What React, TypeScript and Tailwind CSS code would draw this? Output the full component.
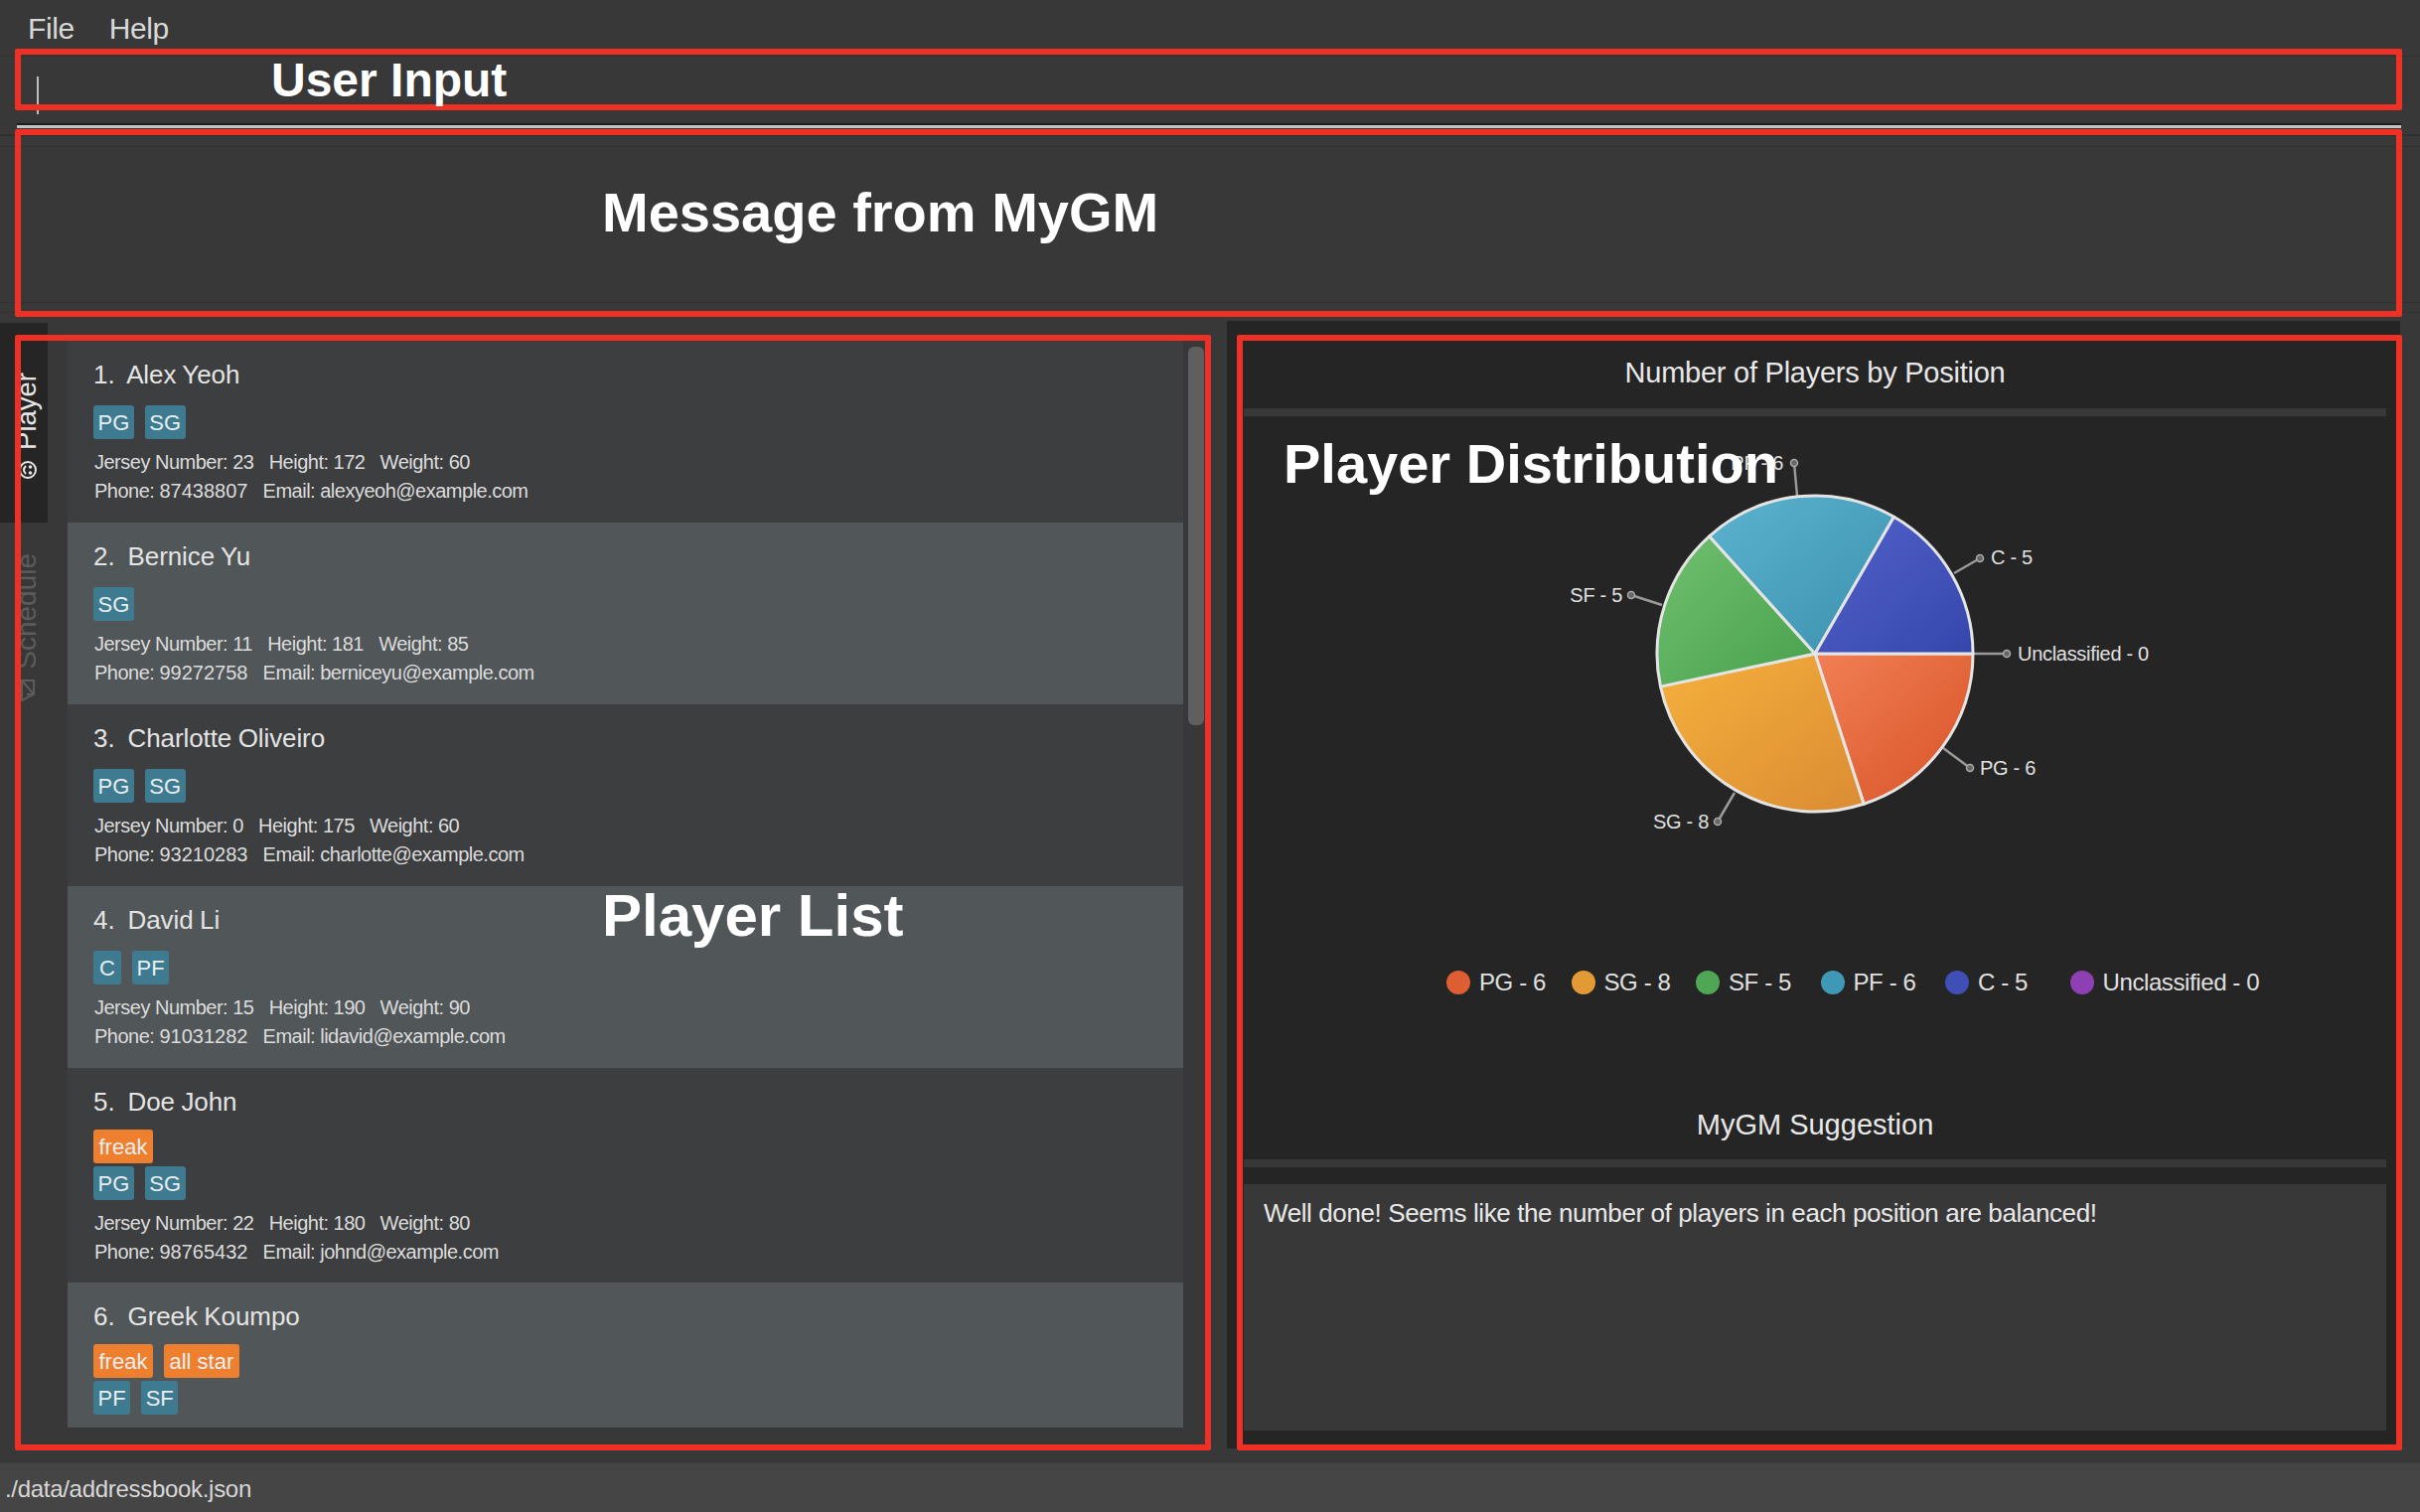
const sans = "font-['Liberation_Sans',Arial,sans-serif]"

type Player = {
  name: string
  extra?: string[]
  pos: string[]
  jersey?: string
  height?: string
  weight?: string
  phone?: string
  email?: string
}

const players: Player[] = [
  { name: "Alex Yeoh", pos: ["PG", "SG"], jersey: "23", height: "172", weight: "60", phone: "87438807", email: "alexyeoh@example.com" },
  { name: "Bernice Yu", pos: ["SG"], jersey: "11", height: "181", weight: "85", phone: "99272758", email: "berniceyu@example.com" },
  { name: "Charlotte Oliveiro", pos: ["PG", "SG"], jersey: "0", height: "175", weight: "60", phone: "93210283", email: "charlotte@example.com" },
  { name: "David Li", pos: ["C", "PF"], jersey: "15", height: "190", weight: "90", phone: "91031282", email: "lidavid@example.com" },
  { name: "Doe John", extra: ["freak"], pos: ["PG", "SG"], jersey: "22", height: "180", weight: "80", phone: "98765432", email: "johnd@example.com" },
  { name: "Greek Koumpo", extra: ["freak", "all star"], pos: ["PF", "SF"] },
]

const legend = [
  { label: "PG - 6", color: "bg-[#dd5e32]" },
  { label: "SG - 8", color: "bg-[#e39a35]" },
  { label: "SF - 5", color: "bg-[#4fa654]" },
  { label: "PF - 6", color: "bg-[#3f98b5]" },
  { label: "C - 5", color: "bg-[#3f4fb5]" },
  { label: "Unclassified - 0", color: "bg-[#8e3fb2]" },
]

function Tag({ text, orange }: { text: string; orange?: boolean }) {
  return (
    <span className={`h-[34px] min-w-[28px] rounded-[3px] flex items-center justify-center text-[22px] text-[#e8eef0] ${orange ? "px-[5.5px] bg-[#ee7f2f]" : "px-[4.5px] bg-[#3e7b91]"}`}>
      {text}
    </span>
  )
}

function PlayerCard({ p, index }: { p: Player; index: number }) {
  return (
    <div className={`shrink-0 pl-[26px] pt-[19px] ${p.extra ? "pb-[16px]" : "pb-[17px]"} ${index % 2 === 0 ? "bg-[#3c3e40]" : "bg-[#515658]"}`}>
      <div className="h-[30px] flex items-center text-[26px] tracking-[-0.1px] [word-spacing:-0.6px] text-[#e4e4e4] whitespace-pre">
        {index + 1}.  {p.name}
      </div>
      <div className={`${p.extra ? "mt-[13px]" : "mt-[16px]"} flex flex-col gap-[3px]`}>
        {p.extra && (
          <div className="flex gap-[11px]">
            {p.extra.map((t) => <Tag key={t} text={t} orange />)}
          </div>
        )}
        <div className="flex gap-[11px]">
          {p.pos.map((t) => <Tag key={t} text={t} />)}
        </div>
      </div>
      {p.jersey && (
        <div className="mt-[9px] pl-[1px] text-[20px] leading-[29px] tracking-[-0.5px] text-[#dcdcdc] whitespace-pre">
          <div>Jersey Number: {p.jersey}   Height: {p.height}   Weight: {p.weight}</div>
          <div>Phone: <span className="tracking-normal">{p.phone}</span>   Email: {p.email}</div>
        </div>
      )}
    </div>
  )
}

function Slice({ d, fill }: { d: string; fill: string }) {
  return <path d={d} fill={fill} stroke="#e4e4e4" strokeWidth="3" strokeLinejoin="round" />
}

// pie is drawn in page pixels minus the svg origin (1500, 440)
function PieChart() {
  const cx = 327
  const cy = 218
  const r = 159
  const pt = (deg: number) => {
    const a = (deg * Math.PI) / 180
    return `${(cx + r * Math.cos(a)).toFixed(1)} ${(cy + r * Math.sin(a)).toFixed(1)}`
  }
  const wedge = (from: number, to: number) =>
    `M${cx} ${cy} L${pt(from)} A${r} ${r} 0 0 1 ${pt(to)} Z`
  const leaders = [
    { x1: 456, y1: 313, x2: 483, y2: 333, tx: 493, ty: 333, anchor: "start", text: "PG - 6" },
    { x1: 246, y1: 358, x2: 229, y2: 387, tx: 220, ty: 387, anchor: "end", text: "SG - 8" },
    { x1: 173, y1: 169, x2: 142, y2: 159, tx: 133, ty: 159, anchor: "end", text: "SF - 5" },
    { x1: 309, y1: 59, x2: 306, y2: 26, tx: 295, ty: 26, anchor: "end", text: "PF - 6" },
    { x1: 467, y1: 137, x2: 493, y2: 122, tx: 504, ty: 121, anchor: "start", text: "C - 5" },
    { x1: 486, y1: 218, x2: 520, y2: 218, tx: 531, ty: 218, anchor: "start", text: "Unclassified - 0" },
  ]
  return (
    <svg width="720" height="420" viewBox="0 0 720 420" className="block">
      <defs>
        <linearGradient id="pg" x1="0" y1="0" x2="1" y2="1">
          <stop offset="0" stopColor="#f27f55" />
          <stop offset="1" stopColor="#d65225" />
        </linearGradient>
        <linearGradient id="sg" x1="0" y1="0" x2="1" y2="1">
          <stop offset="0" stopColor="#f5b03c" />
          <stop offset="1" stopColor="#db8c33" />
        </linearGradient>
        <linearGradient id="sf" x1="0" y1="0" x2="1" y2="1">
          <stop offset="0" stopColor="#70c070" />
          <stop offset="1" stopColor="#48a04c" />
        </linearGradient>
        <linearGradient id="pf" x1="0" y1="0" x2="1" y2="1">
          <stop offset="0" stopColor="#5cb3cf" />
          <stop offset="1" stopColor="#3a90ad" />
        </linearGradient>
        <linearGradient id="c" x1="0" y1="0" x2="1" y2="1">
          <stop offset="0" stopColor="#5262cb" />
          <stop offset="1" stopColor="#3546ab" />
        </linearGradient>
      </defs>
      {leaders.map((l) => (
        <g key={l.text}>
          <line x1={l.x1} y1={l.y1} x2={l.x2} y2={l.y2} stroke="#9a9a9a" strokeWidth="2.5" />
          <circle cx={l.x2} cy={l.y2} r="3.5" fill="#666" stroke="#aaa" strokeWidth="1.5" />
          <text x={l.tx} y={l.ty + 7} textAnchor={l.anchor as "start" | "end"} fontFamily="'Liberation Sans', Arial, sans-serif" fontSize="20" letterSpacing="-0.3" fill="#e0e0e0">
            {l.text}
          </text>
        </g>
      ))}
      <Slice d={wedge(0, 72)} fill="url(#pg)" />
      <Slice d={wedge(72, 168)} fill="url(#sg)" />
      <Slice d={wedge(168, 228)} fill="url(#sf)" />
      <Slice d={wedge(228, 300)} fill="url(#pf)" />
      <Slice d={wedge(300, 360)} fill="url(#c)" />
    </svg>
  )
}

function Smiley() {
  return (
    <svg width="20" height="20" viewBox="0 0 20 20" fill="none" stroke="#e6e6e6" strokeWidth="2" className="rotate-90">
      <circle cx="10" cy="10" r="8" />
      <path d="M6 12 Q10 16 14 12" />
      <circle cx="7" cy="7.5" r="0.8" fill="#e6e6e6" />
      <circle cx="13" cy="7.5" r="0.8" fill="#e6e6e6" />
    </svg>
  )
}

function ScheduleIcon() {
  return (
    <svg width="14" height="24" viewBox="0 0 14 24" fill="none" stroke="#5c5c5c" strokeWidth="2">
      <path d="M1 3h12v14L1 23z" />
      <path d="M1 3l12 14M6 17h7" />
    </svg>
  )
}

function Note({ className }: { className: string }) {
  return <div className={`absolute border-[6px] border-[#ee3124] rounded-[2px] pointer-events-none ${className}`} />
}

function NoteLabel({ className, text }: { className: string; text: string }) {
  return <span className={`absolute font-bold text-white whitespace-nowrap leading-none pointer-events-none ${className}`}>{text}</span>
}

export default function App() {
  return (
    <div className={`${sans} relative w-[2436px] h-[1522px] overflow-hidden bg-[#383838] flex flex-col`}>
      {/* Menu */}
      <div className="h-[57px] shrink-0 flex items-center gap-[35px] pl-[28px] border-b border-[#323232] text-[30px] tracking-[-0.4px] text-[#d8d8d8]">
        <span>File</span>
        <span>Help</span>
      </div>

      {/* Command box */}
      <div className="h-[80px] shrink-0 border-b-2 border-[#303030] pl-[17px] pt-[11px]">
        <div className="h-[58px] flex flex-col justify-between">
          <div className="ml-[20px] mt-[9px] w-[2px] h-[38px] bg-[#bdbdbd]" />
          <div className="h-[5px] -mb-[3px] border-t-2 border-[#1e1e1e] bg-[#c4c4c4] w-[2400px]" />
        </div>
      </div>

      {/* Result display */}
      <div className="h-[188px] shrink-0 flex flex-col pt-[10px] pb-[10px]">
        <div className="flex-1 border-y border-[#313131]" />
        <div className="h-[10px] border-b border-[#313131]" />
      </div>

      {/* Main */}
      <div className="flex-1 min-h-0 flex pr-[20px]">
        <div className="w-[48px] shrink-0 flex flex-col">
          <div className="h-[201px] bg-[#252525] flex items-center pt-[50px] flex-col gap-[10px]">
            <span className="[writing-mode:vertical-rl] rotate-180 text-[27.5px] leading-none text-[#e6e6e6] translate-x-[3px]">Player</span>
            <span className="translate-x-[4px]"><Smiley /></span>
          </div>
          <div className="flex-1 flex flex-col items-center pt-[31px] gap-[8px]">
            <span className="[writing-mode:vertical-rl] rotate-180 text-[28px] leading-none text-[#5c5c5c] translate-x-[3px]">Schedule</span>
            <span className="translate-x-[4px]"><ScheduleIcon /></span>
          </div>
        </div>

        <div className="w-[1164px] shrink-0 pl-[20px] pt-[18px] pb-[35px] flex">
          <div className="w-[1123px] h-[1094px] overflow-hidden flex flex-col">
            {players.map((p, i) => <PlayerCard key={p.name} p={p} index={i} />)}
          </div>
          <div className="ml-[5px] mt-[6px] w-[16px] h-[381px] rounded-[6px] bg-[#5f5f5f]" />
        </div>

        <div className="ml-[23px] flex-1 mt-[-2px] mb-[14px] bg-[#252525] flex flex-col pl-[17px] pr-[14px]">
          <div className="h-[88px] shrink-0 flex items-center justify-center pt-[18px] text-[29px] tracking-[-0.25px] text-[#e8e8e8]">
            Number of Players by Position
          </div>
          <div className="h-[8px] shrink-0 bg-[#383838]" />
          <div className="h-[420px] mt-[21px] ml-[248px] shrink-0">
            <PieChart />
          </div>
          <div className="mt-[70px] ml-[204px] flex items-center h-[117px] shrink-0 text-[24px] tracking-[-0.4px] text-[#e0e0e0]">
            {legend.map((l) => (
              <span key={l.label} className={`flex items-center gap-[9px] ${l.label.startsWith("Un") ? "" : "w-[125.5px]"}`}>
                <span className={`w-[24px] h-[24px] rounded-full ${l.color}`} />
                {l.label}
              </span>
            ))}
          </div>
          <div className="flex-1 flex items-center justify-center text-[29px] text-[#e8e8e8] pt-[52px]">
            MyGM Suggestion
          </div>
          <div className="h-[8px] shrink-0 bg-[#383838]" />
          <div className="h-[248px] mt-[17px] mb-[18px] shrink-0 bg-[#383838] px-[20px] pt-[10px] text-[26px] tracking-[-0.4px] text-[#e8e8e8]">
            Well done! Seems like the number of players in each position are balanced!
          </div>
        </div>
      </div>

      {/* Status bar */}
      <div className="h-[50px] shrink-0 bg-[#454545] border-t border-[#3d3d3d] flex items-center pl-[5px] pt-[2px] text-[24px] tracking-[-0.3px] text-[#d8d8d8]">
        ./data/addressbook.json
      </div>

      {/* Screenshot annotations */}
      <Note className="left-[15px] top-[49px] w-[2403px] h-[62px]" />
      <Note className="left-[15px] top-[130px] w-[2403px] h-[189px]" />
      <Note className="left-[15px] top-[337px] w-[1204px] h-[1123px]" />
      <Note className="left-[1245px] top-[337px] w-[1173px] h-[1123px]" />
      <NoteLabel className="left-[273px] top-[57px] text-[48px]" text="User Input" />
      <NoteLabel className="left-[606px] top-[186px] text-[56px]" text="Message from MyGM" />
      <NoteLabel className="left-[606px] top-[892px] text-[60px]" text="Player List" />
      <NoteLabel className="left-[1292px] top-[439px] text-[56px]" text="Player Distribution" />
    </div>
  )
}
